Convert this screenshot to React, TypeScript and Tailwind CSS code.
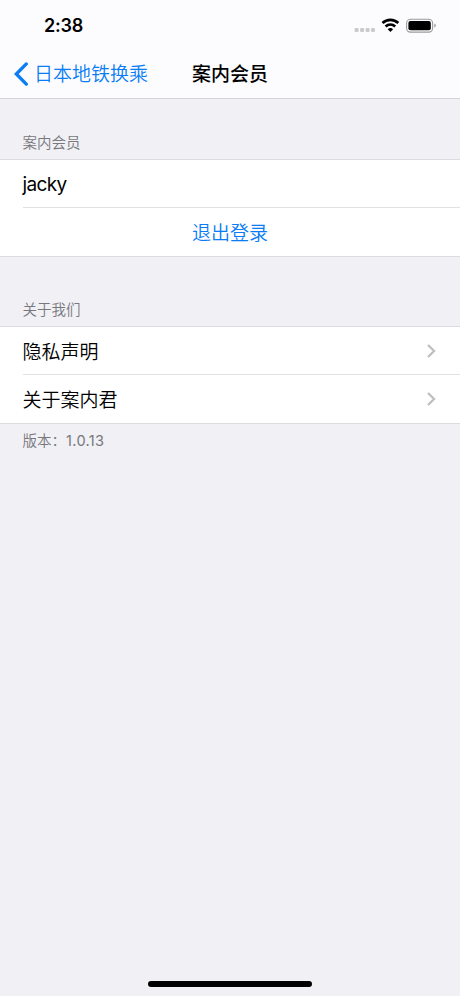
import React from 'react';

function BackChevron() {
  return (
    <svg width="14" height="24" viewBox="0 0 14 24" fill="none">
      <path d="M12.3 1.9 2.3 12l10 10.1" stroke="#0a7cf5" strokeWidth="3.3" strokeLinecap="round" strokeLinejoin="miter" />
    </svg>
  );
}

function Chevron() {
  return (
    <svg width="9" height="14" viewBox="0 0 9 14" fill="none">
      <path d="M1 1l6.1 6L1 13" stroke="#bebec1" strokeWidth="2.2" />
    </svg>
  );
}

function StatusIcons() {
  return (
    <svg width="84" height="18" viewBox="-0.6 -0.4 84 18">
      <g fill="#cacacc">
        <rect x="1" y="11.6" width="4" height="4" rx="1.2" />
        <rect x="6.5" y="11.6" width="4" height="4" rx="1.2" />
        <rect x="12" y="11.6" width="4" height="4" rx="1.2" />
        <rect x="17.4" y="11.6" width="4" height="4" rx="1.2" />
      </g>
      <g fill="none" stroke="#000" strokeWidth="2.7">
        <path d="M28.9 6.6a11.4 11.4 0 0 1 15.8 0" />
        <path d="M32 10a7 7 0 0 1 9.6 0" />
      </g>
      <path d="M36.8 15.6l-2.7-2.8a3.9 3.9 0 0 1 5.4 0z" fill="#000" />
      <rect x="53" y="2.8" width="26" height="12.9" rx="3.8" fill="none" stroke="#9b9b9e" strokeWidth="1.1" />
      <rect x="54.8" y="4.6" width="22.4" height="9.3" rx="2" fill="#000" />
      <path d="M80.7 7.1v4.2q1.5-.6 1.5-2.1t-1.5-2.1z" fill="#9b9b9e" />
    </svg>
  );
}

function Row({ label }: { label: string }) {
  return (
    <div className="flex h-full items-center justify-between pl-[22.5px] pr-6 text-[19px] leading-6 text-black">
      <span className="pt-[4px]">{label}</span>
      <Chevron />
    </div>
  );
}

function Divider() {
  return <div className="ml-[23px] h-px bg-[#e2e2e5]" />;
}

export default function App() {
  return (
    <div className="flex h-[996px] w-[460px] flex-col overflow-hidden bg-[#f0f0f5] font-['Inter','Noto_Sans_CJK_SC',sans-serif] font-[350]">
      <header className="h-[99px] shrink-0 border-b border-[#d4d4d9] bg-[#fcfcfe]">
        <div className="flex h-[50px] items-center justify-between pl-11 pr-[23px]">
          <span className="pt-[2px] text-[18px] font-semibold leading-6 tracking-[-0.2px] text-black">2:38</span>
          <StatusIcons />
        </div>
        <div className="grid h-12 grid-cols-[1fr_auto_1fr] items-center text-[19px] leading-6">
          <div className="flex items-center gap-[6px] pl-3.5 text-[#0a7cf5]">
            <BackChevron />
            <span className="pt-[2px]">日本地铁换乘</span>
          </div>
          <h1 className="pt-[2px] font-medium text-black">案内会员</h1>
        </div>
      </header>

      <main className="flex-1">
        <h2 className="flex h-[60px] items-end pb-[6px] pl-[22.5px] text-[14.5px] leading-5 text-[#77777c]">案内会员</h2>
        <section className="border-y border-[#dcdce0] bg-white">
          <div className="flex h-[47px] items-center pl-[22.5px] pt-[3px] text-[19px] font-normal leading-6 tracking-[-0.65px] text-black">jacky</div>
          <Divider />
          <div className="flex h-12 items-center justify-center pt-[3px] text-[19px] leading-6 text-[#0a7cf5]">退出登录</div>
        </section>

        <h2 className="flex h-[69px] items-end pb-[6px] pl-[22.5px] text-[14.5px] leading-5 text-[#77777c]">关于我们</h2>
        <section className="border-y border-[#dcdce0] bg-white">
          <div className="h-[47px]"><Row label="隐私声明" /></div>
          <Divider />
          <div className="h-12"><Row label="关于案内君" /></div>
        </section>
        <p className="pl-[22.5px] pt-[7px] text-[14.5px] leading-5 text-[#77777c]">版本：<span className="font-normal tracking-[0.35px]">1.0.13</span></p>
      </main>

      <footer className="flex h-[15px] shrink-0 justify-center">
        <div className="h-[6px] w-[164px] rounded-full bg-black" />
      </footer>
    </div>
  );
}
